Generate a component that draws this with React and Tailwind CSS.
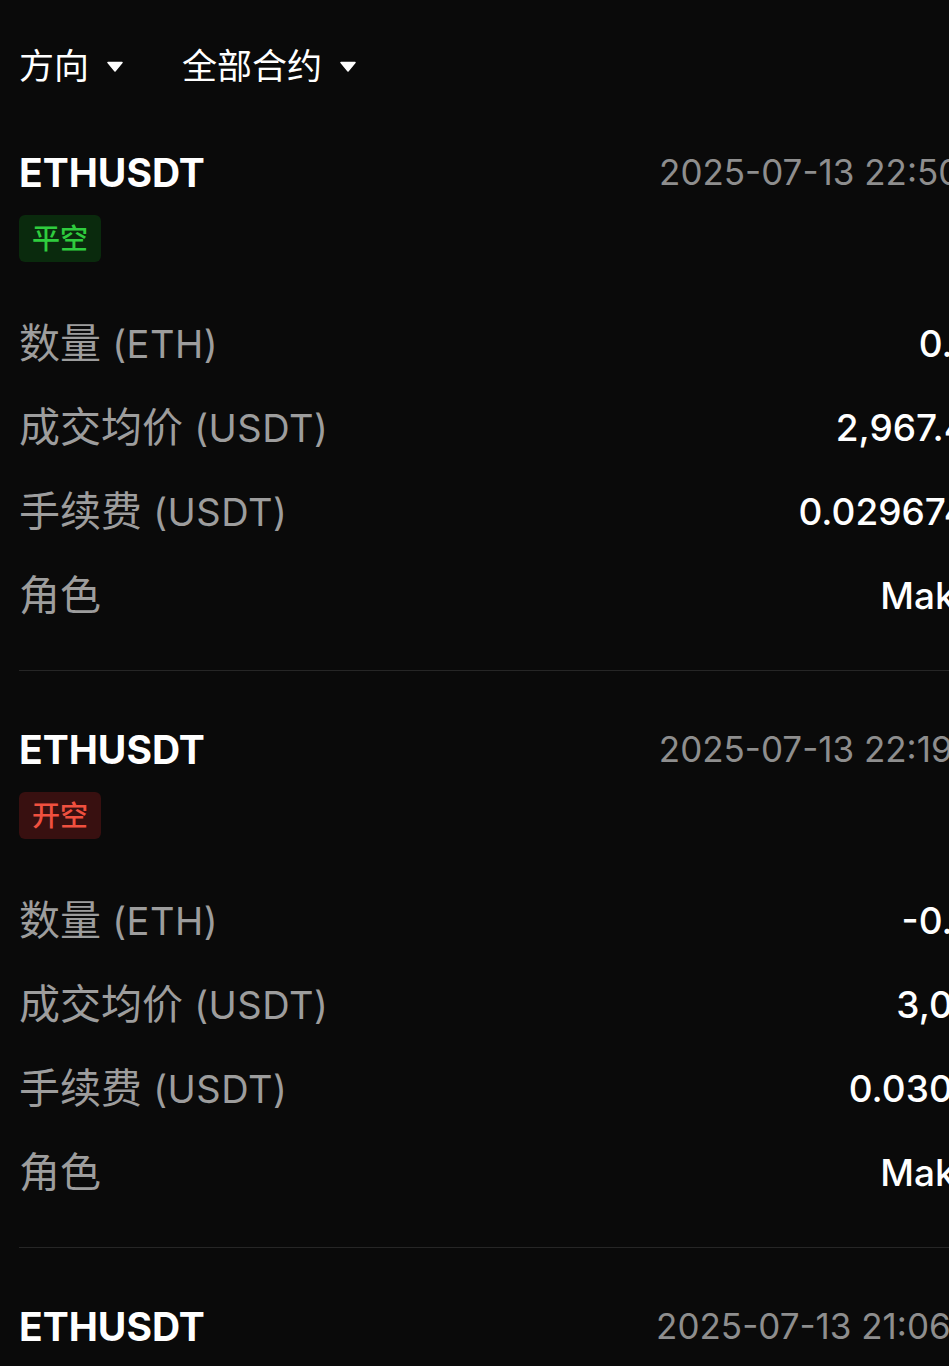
import React from "react";

const Caret = () => (
  <svg width="16" height="11" viewBox="0 0 16 11" className="ml-[18px] shrink-0">
    <path d="M1 1.5 L15 1.5 L8 10 Z" fill="#ffffff" stroke="#ffffff" strokeWidth="1.5" strokeLinejoin="round" />
  </svg>
);

const records = [
  {
    time: "2025-07-13 22:50:12",
    tag: "平空",
    tone: "green",
    qty: "0.01",
    price: "2,967.45",
    fee: "0.0296745",
    role: "Maker",
  },
  {
    time: "2025-07-13 22:19:38",
    tag: "开空",
    tone: "red",
    qty: "-0.01",
    price: "3,015",
    fee: "0.03015",
    role: "Maker",
  },
  {
    time: "2025-07-13 21:06:44",
    tag: "开空",
    tone: "red",
    qty: "-0.01",
    price: "3,008.5",
    fee: "0.0300850",
    role: "Maker",
  },
];

function Row({ cn, unit, value }) {
  return (
    <div className="flex h-[84px] items-center justify-between">
      <span className="leading-none whitespace-nowrap text-[#9d9d9d]">
        <span className="text-[41px]">{cn}</span>
        {unit && <span className="text-[38px] tracking-[0.5px]"> {unit}</span>}
      </span>
      <span className="text-[37px] font-medium text-white leading-none whitespace-nowrap">{value}</span>
    </div>
  );
}

function Record({ r }) {
  return (
    <div className="border-b border-[#262626] pt-[54px] pb-[33px]">
      <div className="flex h-[48px] items-center justify-between">
        <span className="text-[39px] font-bold text-white leading-none">ETHUSDT</span>
        <span className="mr-[-15px] text-[35px] text-[#8e8e8e] leading-none whitespace-nowrap">{r.time}</span>
      </div>
      <div className="mt-[19px] flex">
        {r.tone === "green" ? (
          <span className="inline-flex h-[47px] items-center rounded-[6px] bg-[#0a2a0d] px-[13px] text-[28px] font-medium leading-none text-[#2fcc3e]">
            {r.tag}
          </span>
        ) : (
          <span className="inline-flex h-[47px] items-center rounded-[6px] bg-[#381010] px-[13px] text-[28px] font-medium leading-none text-[#f0503f]">
            {r.tag}
          </span>
        )}
      </div>
      <div className="mt-[39px]">
        <Row cn="数量" unit="(ETH)" value={r.qty} />
        <Row cn="成交均价" unit="(USDT)" value={r.price} />
        <Row cn="手续费" unit="(USDT)" value={r.fee} />
        <Row cn="角色" value={r.role} />
      </div>
    </div>
  );
}

export default function App() {
  return (
    <div className="min-h-screen w-full overflow-hidden bg-[#0a0a0a] font-[Inter,'Noto_Sans_CJK_SC',sans-serif]">
      <div className="w-[1010px] px-[19px]">
        <div className="flex h-[94px] items-start pt-[38px]">
          <div className="flex h-[56px] items-center">
            <span className="text-[35px] text-white leading-none">方向</span>
            <Caret />
          </div>
          <div className="ml-[59px] flex h-[56px] items-center">
            <span className="text-[35px] text-white leading-none">全部合约</span>
            <Caret />
          </div>
        </div>
        {records.map((r, i) => (
          <Record key={i} r={r} />
        ))}
      </div>
    </div>
  );
}
